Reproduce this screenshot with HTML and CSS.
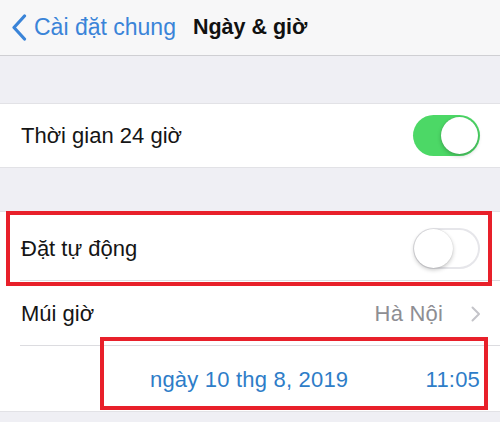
FILE: index.html
```html
<!DOCTYPE html>
<html lang="vi">
<head>
<meta charset="utf-8">
<link rel="stylesheet" href="styles.css">
</head>
<body>
<div class="screen">
  <header class="nav">
    <div class="back">
      <svg class="back-icon" width="16" height="27" viewBox="0 0 16 27"><path d="M13.5 2 L3 13.5 L13.5 25" fill="none" stroke="#3a84d8" stroke-width="3.2" stroke-linecap="round" stroke-linejoin="round"/></svg>
      <span class="back-label">Cài đặt chung</span>
    </div>
    <div class="title">Ngày &amp; giờ</div>
  </header>

  <section class="group group-first">
    <div class="row">
      <span class="label">Thời gian 24 giờ</span>
      <span class="switch on"><span class="knob"></span></span>
    </div>
  </section>

  <section class="group group-second">
    <div class="row row-auto sep">
      <span class="label">Đặt tự động</span>
      <span class="switch off"><span class="knob"></span></span>
    </div>
    <div class="row row-zone sep">
      <span class="label">Múi giờ</span>
      <span class="detail">Hà Nội</span>
      <svg class="chev" width="10" height="16" viewBox="0 0 10 16"><path d="M1.5 1.5 L8 8 L1.5 14.5" fill="none" stroke="#c4c4c9" stroke-width="2" stroke-linecap="round" stroke-linejoin="round"/></svg>
    </div>
    <div class="row row-date">
      <span class="date">ngày 10 thg 8, 2019</span>
      <span class="time">11:05</span>
    </div>
  </section>

  <div class="mark mark-auto"></div>
  <div class="mark mark-date"></div>
</div>
</body>
</html>
```

FILE: styles.css
```css
* { box-sizing: border-box; }
html, body { margin: 0; padding: 0; }
body {
  background: #efeff4;
  font-family: "Liberation Sans", Arial, sans-serif;
  color: #111;
}
.screen {
  position: relative;
  width: 500px;
  height: 422px;
  overflow: hidden;
  background: #efeff4;
}
.nav {
  height: 56px;
  background: #f7f7f8;
  border-bottom: 1px solid #cfcfd3;
  display: flex;
  align-items: center;
  padding-left: 11px;
}
.back {
  display: flex;
  align-items: center;
  gap: 7px;
  color: #3a84d8;
}
.back-icon { display: block; }
.back-label { font-size: 23px; }
.title {
  margin-left: 17px;
  font-size: 21.5px;
  font-weight: bold;
  color: #111;
}
.group {
  background: #fff;
  border-top: 1px solid #e2e2e6;
  border-bottom: 1px solid #e2e2e6;
}
.group-first { margin-top: 47px; }
.group-second { margin-top: 43px; }
.row {
  display: flex;
  align-items: center;
  padding: 0 20px 0 21px;
  position: relative;
}
.group-first .row { height: 63px; }
.row-auto { height: 69px; padding-top: 4px; }
.row-zone { height: 65px; }
.row-date { height: 65px; padding-top: 2px; }
.sep::after {
  content: "";
  position: absolute;
  left: 20px;
  right: 0;
  bottom: 0;
  height: 1px;
  background: #dcdce0;
}
.label { font-size: 22px; color: #151515; }
.switch {
  margin-left: auto;
  width: 67px;
  height: 41px;
  border-radius: 21px;
  position: relative;
  display: block;
}
.switch.on { background: #4cd866; }
.switch.off {
  background: #fff;
  box-shadow: inset 0 0 0 2px #e6e6ea;
}
.knob {
  position: absolute;
  top: 2px;
  width: 37px;
  height: 37px;
  border-radius: 50%;
  background: #fff;
  box-shadow: 0 2px 4px rgba(0,0,0,0.22), 0 0 1px rgba(0,0,0,0.2);
}
.switch.on .knob { right: 2px; }
.switch.off .knob { left: 1px; top: 1px; width: 39px; height: 39px; }
.detail {
  margin-left: auto;
  font-size: 22px;
  letter-spacing: 0.2px;
  color: #8e8e93;
}
.chev { margin-left: 28px; margin-right: -1px; display: block; }
.date, .time { font-size: 22px; letter-spacing: 0.2px; color: #2e7dc8; }
.date { margin-left: 129px; }
.time { margin-left: auto; margin-right: 0; }
.mark {
  position: absolute;
  border: 4px solid #e8202a;
}
.mark-auto { left: 6px; top: 211px; width: 486px; height: 75px; }
.mark-date { left: 100px; top: 337px; width: 388px; height: 73px; }
```
